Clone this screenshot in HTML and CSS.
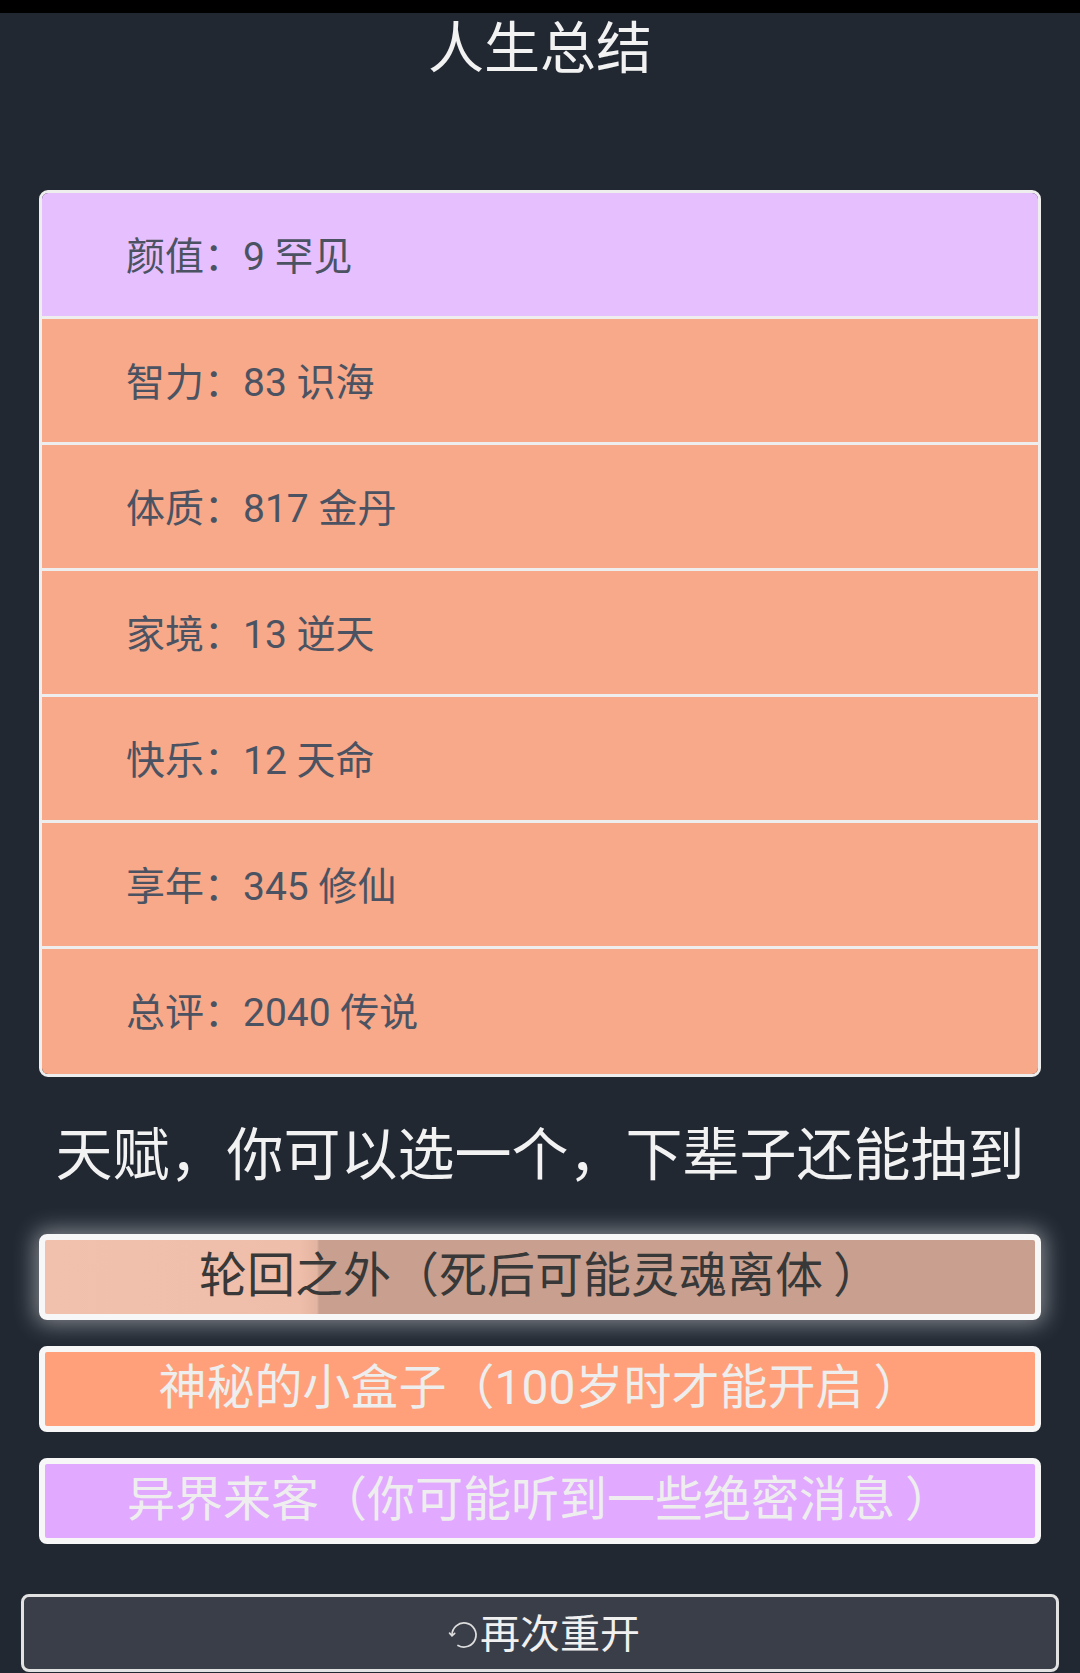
FILE: index.html
```html
<!DOCTYPE html>
<html lang="zh-CN">

<head>
    <meta charset="UTF-8">
    <meta name="viewport" content="width=device-width, initial-scale=1.0">
    <title>人生总结</title>
    <link rel="stylesheet" href="styles.css">
</head>

<body>
    <div class="top-strip"></div>
    <h1 class="title">人生总结</h1>

    <div class="summary">
        <div class="row rare">颜值：9 罕见</div>
        <div class="row legend">智力：83 识海</div>
        <div class="row legend">体质：817 金丹</div>
        <div class="row legend">家境：13 逆天</div>
        <div class="row legend">快乐：12 天命</div>
        <div class="row legend">享年：345 修仙</div>
        <div class="row legend">总评：2040 传说</div>
    </div>

    <h2 class="pick-title">天赋，你可以选一个，下辈子还能抽到</h2>

    <ul class="talents">
        <li class="talent selected">轮回之外（死后可能灵魂离体<span class="close">）</span></li>
        <li class="talent orange">神秘的小盒子（100岁时才能开启<span class="close">）</span></li>
        <li class="talent purple">异界来客（你可能听到一些绝密消息<span class="close">）</span></li>
    </ul>

    <button class="restart">
        <svg class="restart-icon" viewBox="0 0 24 24" width="32" height="32" fill="none" stroke="currentColor"
            stroke-width="1.3" stroke-linecap="round">
            <path d="M7.5 19.8 A9 9 0 1 0 3 12" />
            <path d="M1.2 10.6 L3 12.6 L5 10.8" />
        </svg>再次重开
    </button>
</body>

</html>
```

FILE: styles.css
```css
body {
    margin: 0;
    background-color: #212832;
    font-family: Roboto, "Noto Sans CJK SC", sans-serif;
    color: #eeeeee;
}

.top-strip {
    height: 13px;
    background-color: #000;
}

.title {
    margin: 0;
    padding-top: 4px;
    font-size: 56px;
    font-weight: normal;
    line-height: 64px;
    text-align: center;
    color: #f2f2f2;
}

/* property table */
.summary {
    margin: 109px 39px 0;
    border: 3px solid #eeeeee;
    border-radius: 9px;
    overflow: hidden;
}

.row {
    height: 123px;
    line-height: 129px;
    padding-left: 84px;
    font-size: 39px;
    color: #4b5362;
    border-bottom: 3px solid #eeeeee;
}

.row:last-child {
    border-bottom: none;
    height: 125px;
}

.rare {
    background-color: #e6bffe;
}

.legend {
    background-color: #f7a98a;
}

.pick-title {
    margin: 39px 0 0;
    font-size: 57px;
    font-weight: normal;
    line-height: 80px;
    text-align: center;
    color: #f2f2f2;
}

/* talent choices */
.talents {
    list-style: none;
    margin: 38px 39px 0;
    padding: 0;
    display: flex;
    flex-direction: column;
    gap: 26px;
}

.talent {
    height: 74px;
    line-height: 72px;
    border: 6px solid #f7f7f7;
    border-radius: 8px;
    font-size: 48px;
    text-align: center;
    color: #eeeeee;
    white-space: nowrap;
}

.talent .close {
    padding-left: 10px;
}

.talent.selected {
    color: #383838;
    background: linear-gradient(to right, #f2c1ad 0, #efbeaa 255px, #e3b4a1 272px, #c9a08f 274px, #c9a08f 100%);
    box-shadow: 0 0 22px 4px rgba(255, 255, 255, 0.45);
}

.talent.orange {
    background-color: #ffa07a;
}

.talent.purple {
    background-color: #e1a9ff;
}

.restart {
    display: flex;
    align-items: center;
    justify-content: center;
    box-sizing: border-box;
    width: calc(100% - 42px);
    height: 78px;
    margin: 50px 21px 0;
    padding: 0 0 4px 8px;
    border: 3px solid #e2e2e2;
    border-radius: 8px;
    background-color: #3a3e48;
    color: #f0f0f0;
    font-family: Roboto, "Noto Sans CJK SC", sans-serif;
    font-size: 40px;
    cursor: pointer;
}

.restart-icon {
    color: #dddddd;
    margin-top: 8px;
}
```
